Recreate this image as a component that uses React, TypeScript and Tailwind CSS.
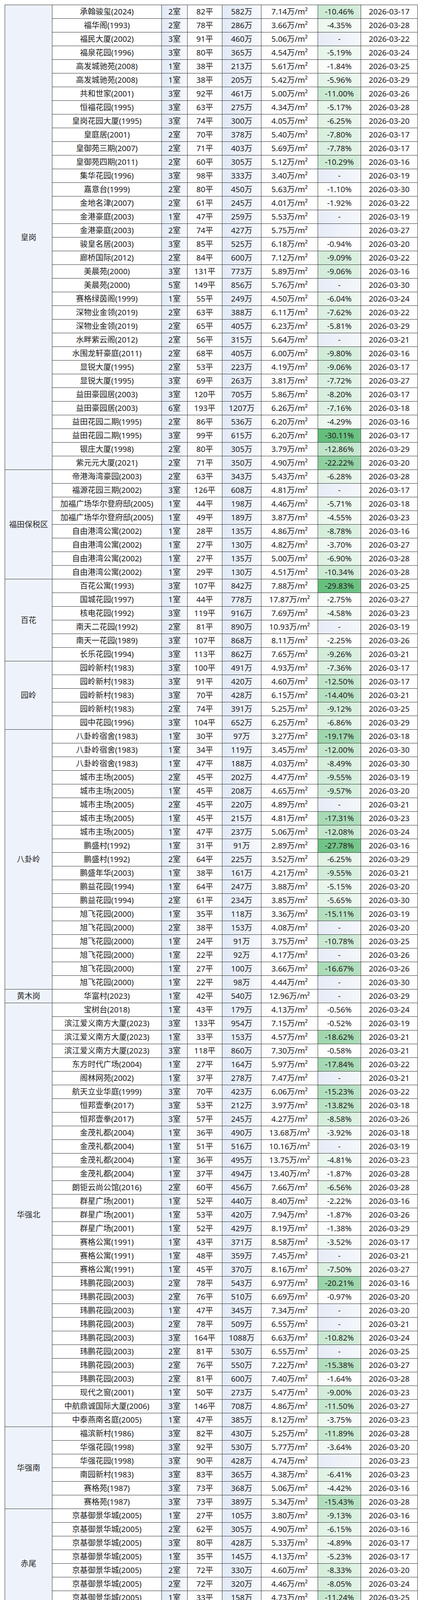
import React from "react";

const DATA: [string, string[]][] = [
  ["皇岗", [
    "承翰骏玺(2024),2,82,582,7.14,-10.46,17",
    "福华阁(1993),2,78,286,3.66,-4.35,28",
    "福民大厦(2002),3,91,460,5.06,-,22",
    "福泉花园(1996),3,80,365,4.54,-5.19,24",
    "高发城驰苑(2008),1,38,213,5.61,-1.84,25",
    "高发城驰苑(2008),1,38,205,5.42,-5.96,29",
    "共和世家(2001),3,92,461,5.00,-11.00,26",
    "恒福花园(1995),3,63,275,4.34,-5.17,28",
    "皇岗花园大厦(1995),3,74,300,4.05,-6.25,20",
    "皇庭居(2001),2,70,378,5.40,-7.80,17",
    "皇御苑三期(2007),2,71,403,5.69,-7.78,17",
    "皇御苑四期(2011),2,60,305,5.12,-10.29,16",
    "集华花园(1996),3,98,333,3.40,-,19",
    "嘉意台(1999),2,80,450,5.63,-1.10,30",
    "金地名津(2007),2,61,245,4.01,-1.92,22",
    "金港豪庭(2003),1,47,259,5.53,-,19",
    "金港豪庭(2003),2,74,427,5.75,,27",
    "骏皇名居(2003),3,85,525,6.18,-0.94,20",
    "廊桥国际(2012),2,84,600,7.12,-9.09,22",
    "美晨苑(2000),3,131,773,5.89,-9.06,16",
    "美晨苑(2000),5,149,856,5.76,-,30",
    "赛格绿茵阁(1999),1,55,249,4.50,-6.04,24",
    "深物业金领(2019),2,63,388,6.11,-7.62,22",
    "深物业金领(2019),2,65,405,6.23,-5.81,29",
    "水畔紫云阁(2012),2,56,315,5.64,-,21",
    "水围龙轩豪庭(2011),2,68,405,6.00,-9.80,16",
    "显锐大厦(1995),2,53,223,4.19,-9.06,17",
    "显锐大厦(1995),3,69,263,3.81,-7.72,27",
    "益田豪园居(2003),3,120,705,5.86,-8.20,17",
    "益田豪园居(2003),6,193,1207,6.26,-7.16,18",
    "益田花园二期(1995),2,86,536,6.20,-4.29,16",
    "益田花园二期(1995),3,99,615,6.20,-30.11,17",
    "银庄大厦(1998),2,80,305,3.79,-12.86,29",
    "紫元元大厦(2021),2,71,350,4.90,-22.22,20",
  ]],
  ["福田保税区", [
    "帝港海湾豪园(2003),2,63,343,5.43,-6.28,28",
    "福源花园三期(2002),3,126,608,4.81,-,17",
    "加福广场华尔登府邸(2005),1,44,198,4.46,-5.71,18",
    "加福广场华尔登府邸(2005),1,49,189,3.87,-4.55,23",
    "自由港湾公寓(2002),1,28,135,4.86,-8.78,16",
    "自由港湾公寓(2002),1,27,130,4.82,-3.70,27",
    "自由港湾公寓(2002),1,27,135,5.00,-6.90,28",
    "自由港湾公寓(2002),1,29,130,4.51,-10.34,28",
  ]],
  ["百花", [
    "百花公寓(1993),3,107,842,7.88,-29.83,25",
    "国城花园(1997),1,44,778,17.87,-2.75,27",
    "核电花园(1992),3,119,916,7.69,-4.58,23",
    "南天二花园(1992),2,81,890,10.93,-,19",
    "南天一花园(1989),3,107,868,8.11,-2.25,26",
    "长乐花园(1994),3,113,862,7.65,-9.26,21",
  ]],
  ["园岭", [
    "园岭新村(1983),3,100,491,4.93,-7.36,17",
    "园岭新村(1983),3,91,420,4.60,-12.50,17",
    "园岭新村(1983),3,70,428,6.15,-14.40,21",
    "园岭新村(1983),2,74,391,5.25,-9.12,25",
    "园中花园(1996),3,104,652,6.25,-6.86,29",
  ]],
  ["八卦岭", [
    "八卦岭宿舍(1983),1,30,97,3.27,-19.17,18",
    "八卦岭宿舍(1983),1,34,119,3.45,-12.00,30",
    "八卦岭宿舍(1983),1,47,188,4.03,-8.49,30",
    "城市主场(2005),2,45,202,4.47,-9.55,19",
    "城市主场(2005),1,45,208,4.65,-9.57,20",
    "城市主场(2005),2,45,220,4.89,-,21",
    "城市主场(2005),1,45,215,4.81,-17.31,23",
    "城市主场(2005),1,47,237,5.06,-12.08,24",
    "鹏盛村(1992),1,31,91,2.89,-27.78,16",
    "鹏盛村(1992),2,64,225,3.52,-6.25,29",
    "鹏盛年华(2003),1,38,161,4.21,-9.55,21",
    "鹏益花园(1994),1,64,247,3.88,-5.15,20",
    "鹏益花园(1994),2,61,234,3.85,-5.65,30",
    "旭飞花园(2000),1,35,118,3.36,-15.11,19",
    "旭飞花园(2000),2,38,153,4.08,-,20",
    "旭飞花园(2000),1,24,91,3.75,-10.78,25",
    "旭飞花园(2000),1,22,92,4.17,-,26",
    "旭飞花园(2000),1,27,100,3.66,-16.67,26",
    "旭飞花园(2000),1,22,98,4.44,-,30",
  ]],
  ["黄木岗", [
    "华富村(2023),1,42,540,12.96,-,29",
  ]],
  ["华强北", [
    "宝树台(2018),1,43,179,4.13,-0.56,24",
    "滨江爱义南方大厦(2023),3,133,954,7.15,-0.52,19",
    "滨江爱义南方大厦(2023),1,33,153,4.57,-18.62,21",
    "滨江爱义南方大厦(2023),3,118,860,7.30,-0.58,21",
    "东方时代广场(2004),1,27,164,5.97,-17.84,22",
    "阁林网苑(2002),1,37,278,7.47,-,21",
    "航天立业华庭(1999),3,70,423,6.06,-15.23,22",
    "恒邦壹拳(2017),3,53,212,3.97,-13.82,18",
    "恒邦壹拳(2017),3,57,245,4.27,-8.58,26",
    "金茂礼都(2004),1,36,490,13.68,-3.92,18",
    "金茂礼都(2004),1,51,516,10.16,-,19",
    "金茂礼都(2004),1,36,495,13.75,-4.81,23",
    "金茂礼都(2004),1,37,494,13.40,-1.87,28",
    "朗钜云尚公馆(2016),2,60,456,7.66,-6.56,28",
    "群星广场(2001),1,52,440,8.40,-2.22,16",
    "群星广场(2001),1,53,420,7.94,-1.87,26",
    "群星广场(2001),1,52,429,8.19,-1.38,29",
    "赛格公寓(1991),1,43,371,8.58,-3.52,17",
    "赛格公寓(1991),1,48,359,7.45,-,21",
    "赛格公寓(1991),1,45,370,8.16,-7.50,27",
    "玮鹏花园(2003),2,78,543,6.97,-20.21,16",
    "玮鹏花园(2003),2,76,510,6.69,-0.97,20",
    "玮鹏花园(2003),1,47,345,7.34,-,20",
    "玮鹏花园(2003),2,78,509,6.55,-,21",
    "玮鹏花园(2003),3,164,1088,6.63,-10.82,24",
    "玮鹏花园(2003),2,81,530,6.55,-,25",
    "玮鹏花园(2003),2,76,550,7.22,-15.38,27",
    "玮鹏花园(2003),2,81,600,7.40,-1.64,28",
    "现代之窗(2001),1,50,273,5.47,-9.00,23",
    "中航鼎诚国际大厦(2006),3,146,708,4.86,-11.50,27",
    "中泰燕南名庭(2005),1,47,385,8.12,-3.75,23",
  ]],
  ["华强南", [
    "福滨新村(1986),3,82,430,5.25,-11.89,28",
    "华强花园(1998),3,92,530,5.77,-3.64,20",
    "华强花园(1998),3,90,428,4.74,,23",
    "南园新村(1983),3,83,365,4.38,-6.41,23",
    "赛格苑(1987),3,73,368,5.06,-4.42,16",
    "赛格苑(1987),3,73,389,5.34,-15.43,28",
  ]],
  ["赤尾", [
    "京基御景华城(2005),1,27,105,3.80,-9.13,16",
    "京基御景华城(2005),2,62,305,4.90,-6.15,16",
    "京基御景华城(2005),3,80,428,5.33,-4.89,17",
    "京基御景华城(2005),1,35,145,4.13,-5.23,17",
    "京基御景华城(2005),2,72,330,4.60,-8.33,20",
    "京基御景华城(2005),2,72,320,4.46,-8.05,24",
    "京基御景华城(2005),1,33,158,4.73,-11.24,25",
    "京基御景华城(2005),2,66,290,4.40,-8.23,29",
  ]],
  ["上步", [
    "滨江新村(1984),2,77,305,3.96,-,18",
    "滨江新村(1984),3,80,332,4.15,-,20",
    "佳兆业中心(2006),1,22,49,2.27,-10.91,29",
  ]],
  ["银湖", [
    "新阁小区(1993),1,39,110,2.82,-,29",
  ]],
];

const GREEN = [99, 190, 123];
function shade(t: number) {
  const k = Math.max(0, Math.min(1, t));
  const c = GREEN.map((g) => Math.round(255 + (g - 255) * k));
  return `rgb(${c[0]},${c[1]},${c[2]})`;
}

function changeBg(change: string): string {
  if (change === "-" || change === "") {
    return "linear-gradient(to right, #e6ecf6, #f5f7fb)";
  }
  const v = Math.abs(parseFloat(change));
  const t = (v - 0.5) / (30.11 - 0.5);
  return `linear-gradient(to right, ${shade(t)}, ${shade(t - 0.07)})`;
}

const cell = "flex items-center justify-center border-r border-b border-[#2f2f2f] whitespace-nowrap";
const blue = "bg-linear-to-r from-[#e1eaf7] to-[#f6f8fc]";

export default function App() {
  return (
    <div className="min-h-[4297px] bg-white pl-[12px] pt-[12px] font-['Noto_Sans','Noto_Sans_CJK_SC',sans-serif] text-[20px] leading-none text-[#1c1c1c]">
      <div className="w-[1057px] border-l border-t border-[#2f2f2f]">
        {DATA.map(([district, rows]) => (
          <div key={district} className="flex">
            <div className={`${cell} w-[121px] shrink-0 bg-[#eef3fb] text-[#2a2a2a]`}>{district}</div>
            <div className="flex flex-1 flex-col">
              {rows.map((r, i) => {
                const [name, rooms, area, price, unit, change, day] = r.split(",");
                return (
                  <div
                    key={i}
                    className="grid h-[35px] grid-cols-[280px_66px_89px_100px_145px_110px_145px]"
                  >
                    <div className={`${cell} bg-white`}>{name}</div>
                    <div className={`${cell} ${blue}`}>{rooms}室</div>
                    <div className={`${cell} bg-white`}>{area}平</div>
                    <div className={`${cell} ${blue}`}>{price}万</div>
                    <div className={`${cell} bg-white`}>{unit}万/m²</div>
                    <div className={cell} style={{ background: changeBg(change) }}>
                      {change === "-" ? "-" : change === "" ? "" : `${change}%`}
                    </div>
                    <div className={`${cell} bg-white`}>2026-03-{day}</div>
                  </div>
                );
              })}
            </div>
          </div>
        ))}
      </div>
    </div>
  );
}
